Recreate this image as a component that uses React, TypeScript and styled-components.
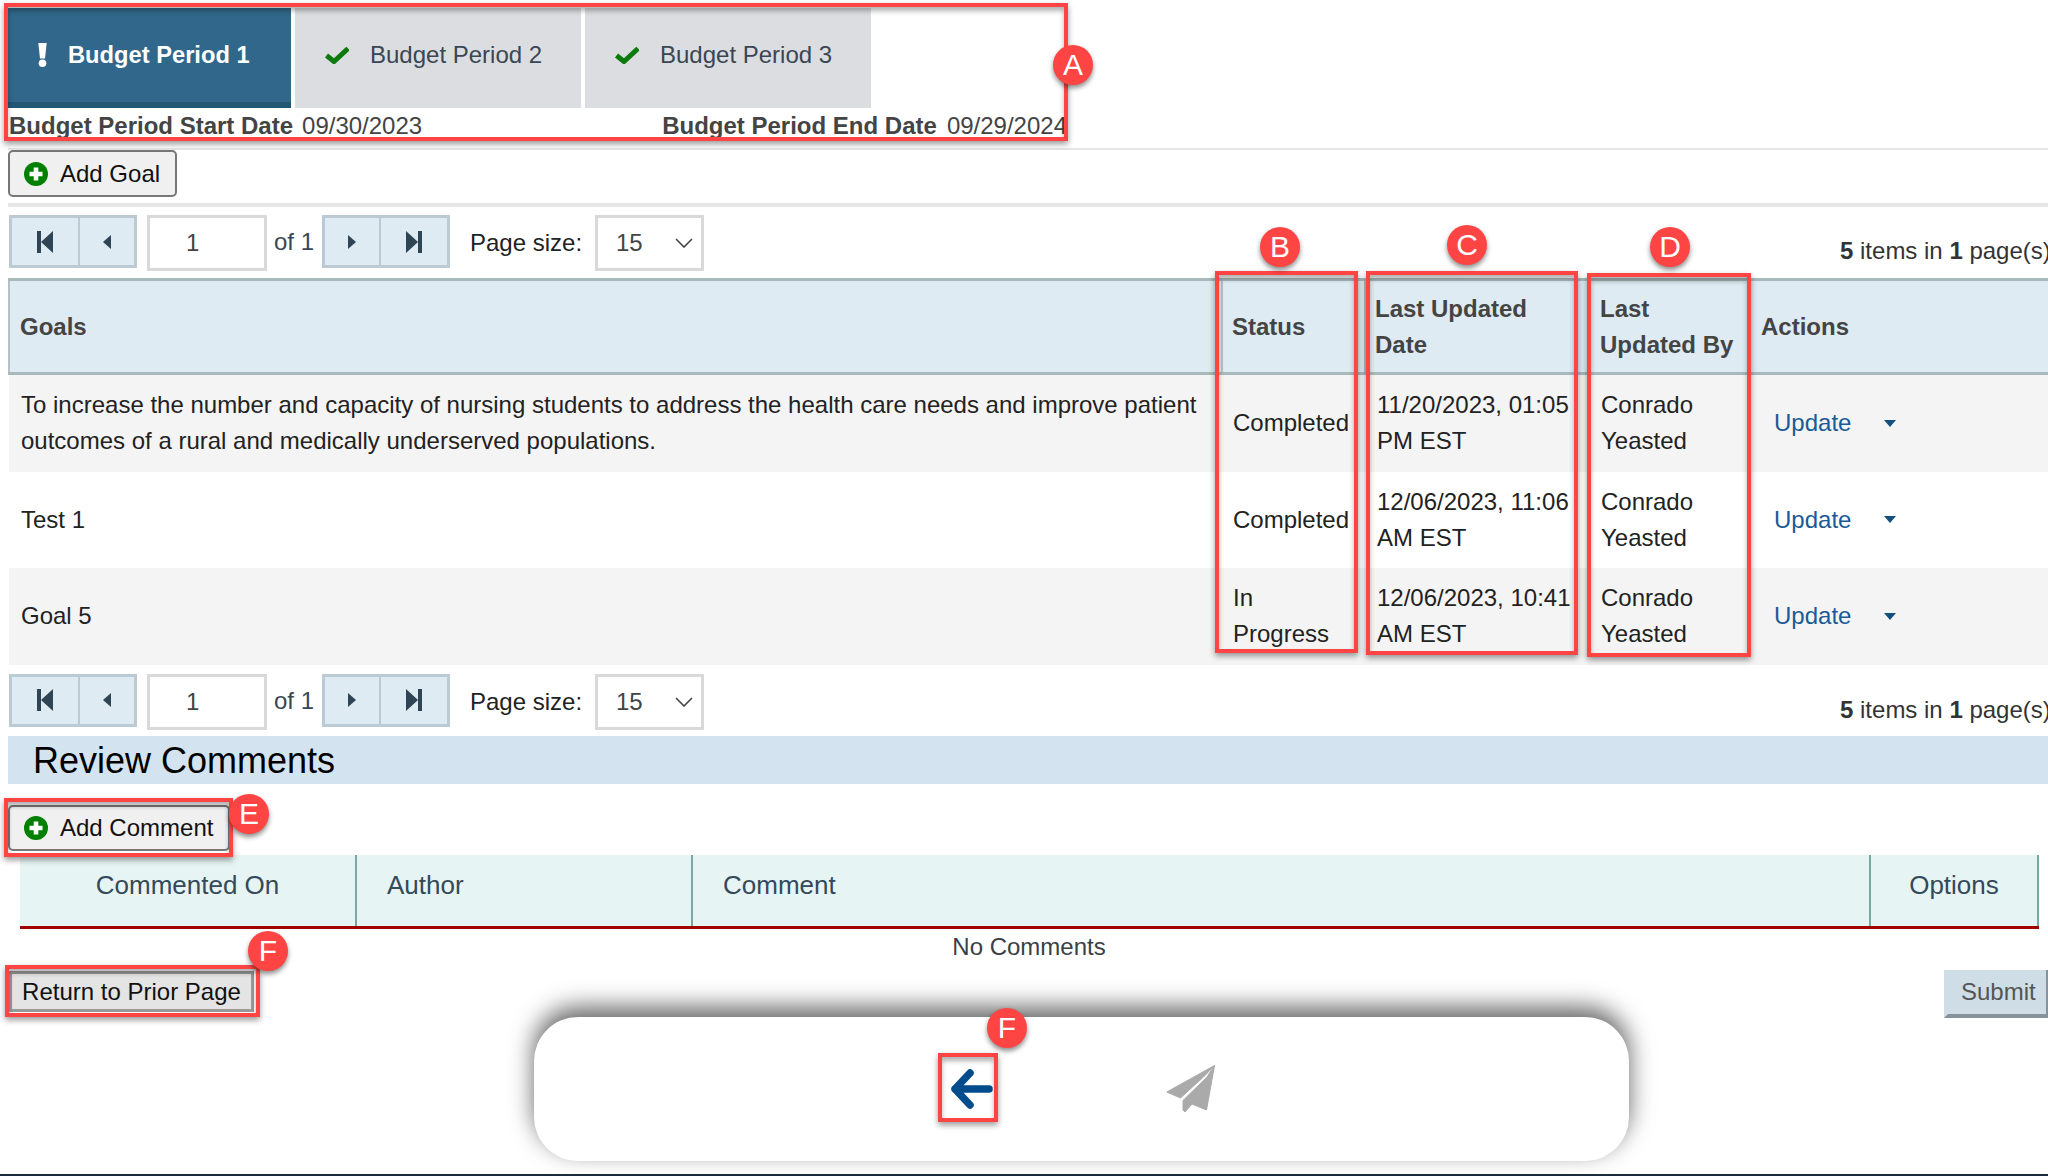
import React from "react";
import styled, { createGlobalStyle } from "styled-components";

const Global = createGlobalStyle`
  html, body { margin: 0; padding: 0; background: #fff; overflow: hidden; }
  body { font-family: "Liberation Sans", Arial, sans-serif; font-size: 24px; line-height: 36px; color: #222; }
  * { box-sizing: border-box; }
`;

const Page = styled.div`
  position: relative;
  width: 2048px;
  height: 1176px;
  overflow: hidden;
  padding-left: 8px;
`;

const Tabs = styled.div`
  display: flex;
  gap: 4px;
  padding-top: 8px;
  height: 108px;
`;

const Tab = styled.div<{ $active?: boolean }>`
  width: ${(p) => (p.$active ? 283 : 286)}px;
  display: flex;
  align-items: center;
  gap: 21px;
  padding-left: 30px;
  background: ${(p) => (p.$active ? "#30678a" : "#dcdde0")};
  border-bottom: 6px solid ${(p) => (p.$active ? "#235673" : "#dcdde0")};
  color: ${(p) => (p.$active ? "#fff" : "#3a4654")};
  font-size: ${(p) => (p.$active ? 23.7 : 24)}px;
  font-weight: ${(p) => (p.$active ? 700 : 400)};
  white-space: nowrap;
`;

const Dates = styled.div`
  display: flex;
  justify-content: space-between;
  width: 1059px;
  height: 36px;
  padding-left: 1px;
  color: #444;
  white-space: nowrap;
`;

const DateGroup = styled.div<{ $gap: number }>`
  display: flex;
  gap: ${(p) => p.$gap}px;
`;

const Strong = styled.b`
  font-weight: 700;
`;

const Rule = styled.div<{ $top: number; $height: number }>`
  margin-top: ${(p) => p.$top}px;
  height: ${(p) => p.$height}px;
  background: #e6e6e6;
`;

const IconButton = styled.button<{ $top?: number; $height: number }>`
  display: flex;
  align-items: center;
  gap: 12px;
  height: ${(p) => p.$height}px;
  margin: ${(p) => p.$top ?? 0}px 0 0 0;
  padding: 0 15px 0 14px;
  background: #f0f0f0;
  border: 2px solid #777;
  border-radius: 5px;
  font: inherit;
  color: #111;
  white-space: nowrap;
`;

const Pager = styled.div<{ $top: number }>`
  display: flex;
  align-items: flex-start;
  height: 56px;
  margin-top: ${(p) => p.$top}px;
  padding-left: 1px;
`;

const PagerGroup = styled.div`
  display: flex;
  height: 53px;
  border: 3px solid #bccad4;
  background: #deebf3;
`;

const PagerButton = styled.button<{ $width: number; $divided?: boolean }>`
  display: flex;
  align-items: center;
  justify-content: center;
  width: ${(p) => p.$width}px;
  height: 100%;
  padding: 0;
  border: 0;
  border-left: ${(p) => (p.$divided ? "2px solid #bccad4" : "0")};
  background: transparent;
`;

const PageInput = styled.input`
  width: 120px;
  height: 56px;
  margin-left: 10px;
  padding: 0 0 0 36px;
  border: 3px solid #d9d9d9;
  background: #fff;
  color: #444;
  font: inherit;
  outline: none;
`;

const OfLabel = styled.span`
  width: 55px;
  padding-left: 7px;
  line-height: 54px;
  color: #3a4654;
  white-space: nowrap;
`;

const PageSizeLabel = styled.span`
  width: 125px;
  margin-left: 20px;
  line-height: 56px;
  color: #222;
  white-space: nowrap;
`;

const PageSizeSelect = styled.div`
  display: flex;
  align-items: center;
  justify-content: space-between;
  width: 109px;
  height: 56px;
  padding: 0 8px 0 18px;
  border: 3px solid #d9d9d9;
  color: #444;
`;

const ItemsInfo = styled.div`
  margin: 18px 0 0 auto;
  width: 208px;
  flex-shrink: 0;
  white-space: nowrap;
  color: #333;
`;

const GoalsTable = styled.table`
  width: 2040px;
  margin-top: 7px;
  table-layout: fixed;
  border-collapse: collapse;
`;

const HeadCell = styled.th<{ $ruled?: boolean; $inset?: number }>`
  height: 94px;
  padding: 0 10px 0 ${(p) => p.$inset ?? 10}px;
  background: #deebf3;
  border-top: 3px solid #a9b8bb;
  border-bottom: 3px solid #a9b8bb;
  border-left: ${(p) => (p.$ruled ? "2px solid #b4c2c6" : "0")};
  color: #444;
  font-weight: 700;
  text-align: left;
`;

const Row = styled.tr<{ $shaded?: boolean; $height: number }>`
  height: ${(p) => p.$height}px;
  background: ${(p) => (p.$shaded ? "#f4f4f4" : "#fff")};
`;

const Cell = styled.td<{ $inset?: number }>`
  padding: 0 12px 0 ${(p) => p.$inset ?? 12}px;
  color: #222;
`;

const UpdateCell = styled.td`
  padding: 0 0 0 23px;
`;

const UpdateWrap = styled.div`
  display: flex;
  align-items: center;
  gap: 33px;
`;

const UpdateLink = styled.a`
  color: #1a5a96;
`;

const Caret = styled.span`
  width: 0;
  height: 0;
  border-left: 6px solid transparent;
  border-right: 6px solid transparent;
  border-top: 7px solid #14507f;
`;

const SectionBar = styled.h2`
  height: 48px;
  margin: 6px 0 0;
  padding-left: 25px;
  background: #d3e3f0;
  color: #000;
  font-size: 36px;
  font-weight: 400;
  line-height: 50px;
`;

const CommentsTable = styled.table`
  width: 2018px;
  margin: 4px 0 0 12px;
  table-layout: fixed;
  border-collapse: collapse;
`;

const CommentHead = styled.th<{ $align?: string; $ruled?: boolean; $end?: boolean }>`
  height: 73px;
  padding: 12px 0 0 ${(p) => (p.$align === "center" ? 0 : 30)}px;
  vertical-align: top;
  background: #e6f5f3;
  border-bottom: 3px solid #a00000;
  border-left: ${(p) => (p.$ruled ? "2px solid #7ba6a2" : "0")};
  border-right: ${(p) => (p.$end ? "2px solid #7ba6a2" : "0")};
  color: #34495a;
  font-size: 26px;
  font-weight: 400;
  text-align: ${(p) => p.$align ?? "left"};
`;

const NoComments = styled.div`
  width: 2042px;
  height: 36px;
  text-align: center;
  color: #3a3f45;
`;

const FooterRow = styled.div`
  display: flex;
  justify-content: space-between;
  align-items: flex-start;
  height: 47px;
  margin-top: 5px;
`;

const ReturnButton = styled.button`
  width: 245px;
  height: 41px;
  margin: 1px 0 0 1px;
  padding: 0;
  background: #e4e4e4;
  border: 3px solid #999;
  color: #111;
  font: inherit;
  white-space: nowrap;
`;

const SubmitButton = styled.button`
  width: 104px;
  height: 48px;
  padding: 0 0 0 13px;
  text-align: left;
  background: #cfdde6;
  border: 0;
  border-left: 4px solid #cfdde6;
  border-right: 2px solid #87939a;
  border-bottom: 4px solid #87939a;
  color: #555;
  font: inherit;
`;

const ActionCard = styled.div`
  display: flex;
  align-items: center;
  width: 1095px;
  height: 144px;
  margin-left: 526px;
  padding-left: 414px;
  gap: 172px;
  background: #fff;
  border-radius: 44px;
  box-shadow: 0 -10px 24px rgba(0, 0, 0, 0.6);
  position: relative;
`;

const BottomBar = styled.div`
  position: absolute;
  left: 0;
  right: 0;
  bottom: 0;
  height: 2px;
  background: #1d2b3a;
`;

const Frame = styled.div<{ $x: number; $y: number; $w: number; $h: number }>`
  position: absolute;
  left: ${(p) => p.$x}px;
  top: ${(p) => p.$y}px;
  width: ${(p) => p.$w}px;
  height: ${(p) => p.$h}px;
  border: 4px solid #ff4444;
  box-shadow: 0 3px 6px rgba(0, 0, 0, 0.4), inset 0 4px 5px rgba(0, 0, 0, 0.3);
  pointer-events: none;
`;

const Badge = styled.div<{ $x: number; $y: number }>`
  position: absolute;
  left: ${(p) => p.$x}px;
  top: ${(p) => p.$y}px;
  width: 40px;
  height: 40px;
  border-radius: 50%;
  background: #ff4444;
  box-shadow: 0 3px 5px rgba(0, 0, 0, 0.45);
  color: #fff;
  font-size: 30px;
  line-height: 40px;
  text-align: center;
`;

const Plus = () => (
  <svg width="24" height="24" viewBox="0 0 24 24" aria-hidden="true">
    <circle cx="12" cy="12" r="12" fill="#008000" />
    <path d="M12 5.5v13M5.5 12h13" stroke="#fff" strokeWidth="4.6" />
  </svg>
);

const Check = () => (
  <svg width="24" height="18" viewBox="0 0 24 18" aria-hidden="true">
    <path d="M1.5 9.5L9 15.5 23 2.5" fill="none" stroke="#0a7a0a" strokeWidth="5" />
  </svg>
);

const Bang = () => (
  <svg width="9" height="24" viewBox="0 0 9 24" aria-hidden="true">
    <path d="M.3 0h8.4L7 15.5H2z" fill="#fff" />
    <circle cx="4.5" cy="20.2" r="3.8" fill="#fff" />
  </svg>
);

const Nav = ({ kind }: { kind: "first" | "prev" | "next" | "last" }) => {
  const c = "#2f4454";
  if (kind === "first")
    return (
      <svg width="16" height="22" viewBox="0 0 16 22" aria-hidden="true">
        <path d="M0 0h4v22H0zM16 0v22L4 11z" fill={c} />
      </svg>
    );
  if (kind === "last")
    return (
      <svg width="16" height="22" viewBox="0 0 16 22" aria-hidden="true">
        <path d="M12 0h4v22h-4zM0 0v22l12-11z" fill={c} />
      </svg>
    );
  if (kind === "prev")
    return (
      <svg width="8" height="14" viewBox="0 0 8 14" aria-hidden="true">
        <path d="M8 0v14L0 7z" fill={c} />
      </svg>
    );
  return (
    <svg width="8" height="14" viewBox="0 0 8 14" aria-hidden="true">
      <path d="M0 0v14l8-7z" fill={c} />
    </svg>
  );
};

const Chevron = () => (
  <svg width="18" height="10" viewBox="0 0 18 10" aria-hidden="true">
    <path d="M1 1l8 8 8-8" fill="none" stroke="#444" strokeWidth="1.6" />
  </svg>
);

const BackArrow = () => (
  <svg width="46" height="44" viewBox="0 0 46 44" aria-hidden="true">
    <path
      d="M41 22H7M22 6L7 22l15 16"
      fill="none"
      stroke="#004c8c"
      strokeWidth="7.5"
      strokeLinecap="round"
      strokeLinejoin="round"
    />
  </svg>
);

const PaperPlane = () => (
  <svg width="50" height="48" viewBox="0 0 50 48" aria-hidden="true">
    <g fill="#aaa" stroke="#aaa" strokeWidth="1" strokeLinejoin="round">
      <path d="M48.5.5L.8 27l13.7 6L39.5 10z" />
      <path d="M48.5.5L40.5 45 26 39l-7 8-2-2V35.5L41 12z" />
    </g>
  </svg>
);

const PagerBar = ({ top }: { top: number }) => (
  <Pager $top={top}>
    <PagerGroup>
      <PagerButton $width={66}><Nav kind="first" /></PagerButton>
      <PagerButton $width={56} $divided><Nav kind="prev" /></PagerButton>
    </PagerGroup>
    <PageInput readOnly defaultValue="1" />
    <OfLabel>of 1</OfLabel>
    <PagerGroup>
      <PagerButton $width={54}><Nav kind="next" /></PagerButton>
      <PagerButton $width={68} $divided><Nav kind="last" /></PagerButton>
    </PagerGroup>
    <PageSizeLabel>Page size:</PageSizeLabel>
    <PageSizeSelect>
      15
      <Chevron />
    </PageSizeSelect>
    <ItemsInfo>
      <Strong>5</Strong> items in <Strong>1</Strong> page(s)
    </ItemsInfo>
  </Pager>
);

const goals = [
  {
    goal: "To increase the number and capacity of nursing students to address the health care needs and improve patient outcomes of a rural and medically underserved populations.",
    status: <>Completed</>,
    date: "11/20/2023, 01:05 PM EST",
    height: 98,
  },
  { goal: "Test 1", status: <>Completed</>, date: "12/06/2023, 11:06 AM EST", height: 96 },
  { goal: "Goal 5", status: <>In<br />Progress</>, date: "12/06/2023, 10:41 AM EST", height: 97 },
];

const frames = [
  { x: 4, y: 3, w: 1064, h: 138 },
  { x: 1215, y: 271, w: 143, h: 382 },
  { x: 1366, y: 271, w: 212, h: 384 },
  { x: 1587, y: 273, w: 164, h: 384 },
  { x: 4, y: 798, w: 229, h: 59 },
  { x: 5, y: 965, w: 255, h: 52 },
  { x: 938, y: 1053, w: 60, h: 69 },
];

const badges = [
  { x: 1053, y: 45, label: "A" },
  { x: 1260, y: 227, label: "B" },
  { x: 1447, y: 225, label: "C" },
  { x: 1650, y: 227, label: "D" },
  { x: 229, y: 794, label: "E" },
  { x: 248, y: 931, label: "F" },
  { x: 987, y: 1008, label: "F" },
];

export default function App() {
  return (
    <Page>
      <Global />
      <Tabs>
        <Tab $active><Bang />Budget Period 1</Tab>
        <Tab><Check />Budget Period 2</Tab>
        <Tab><Check />Budget Period 3</Tab>
      </Tabs>
      <Dates>
        <DateGroup $gap={9}><Strong>Budget Period Start Date</Strong>09/30/2023</DateGroup>
        <DateGroup $gap={10}><Strong>Budget Period End Date</Strong>09/29/2024</DateGroup>
      </Dates>
      <Rule $top={4} $height={2} />
      <IconButton $height={47}><Plus />Add Goal</IconButton>
      <Rule $top={6} $height={4} />
      <PagerBar top={8} />
      <GoalsTable>
        <colgroup>
          <col width={1213} />
          <col width={143} />
          <col width={226} />
          <col width={160} />
          <col width={298} />
        </colgroup>
        <thead>
          <tr>
            <HeadCell $ruled>Goals</HeadCell>
            <HeadCell $ruled $inset={9}>Status</HeadCell>
            <HeadCell $ruled $inset={9}>Last Updated Date</HeadCell>
            <HeadCell $inset={9}>Last Updated By</HeadCell>
            <HeadCell>Actions</HeadCell>
          </tr>
        </thead>
        <tbody>
          {goals.map((g, i) => (
            <Row key={g.goal} $shaded={i % 2 === 0} $height={g.height}>
              <Cell>{g.goal}</Cell>
              <Cell $inset={11}>{g.status}</Cell>
              <Cell>{g.date}</Cell>
              <Cell $inset={10}>Conrado Yeasted</Cell>
              <UpdateCell>
                <UpdateWrap>
                  <UpdateLink>Update</UpdateLink>
                  <Caret />
                </UpdateWrap>
              </UpdateCell>
            </Row>
          ))}
        </tbody>
      </GoalsTable>
      <PagerBar top={9} />
      <SectionBar>Review Comments</SectionBar>
      <IconButton $top={21} $height={46}><Plus />Add Comment</IconButton>
      <CommentsTable>
        <colgroup>
          <col width={336} />
          <col width={336} />
          <col width={1178} />
          <col width={168} />
        </colgroup>
        <thead>
          <tr>
            <CommentHead $align="center">Commented On</CommentHead>
            <CommentHead $ruled>Author</CommentHead>
            <CommentHead $ruled>Comment</CommentHead>
            <CommentHead $ruled $end $align="center">Options</CommentHead>
          </tr>
        </thead>
      </CommentsTable>
      <NoComments>No Comments</NoComments>
      <FooterRow>
        <ReturnButton>Return to Prior Page</ReturnButton>
        <SubmitButton>Submit</SubmitButton>
      </FooterRow>
      <ActionCard>
        <BackArrow />
        <PaperPlane />
      </ActionCard>
      <BottomBar />
      {frames.map((f) => (
        <Frame key={`${f.x}-${f.y}`} $x={f.x} $y={f.y} $w={f.w} $h={f.h} />
      ))}
      {badges.map((b) => (
        <Badge key={`${b.x}-${b.y}`} $x={b.x} $y={b.y}>{b.label}</Badge>
      ))}
    </Page>
  );
}
